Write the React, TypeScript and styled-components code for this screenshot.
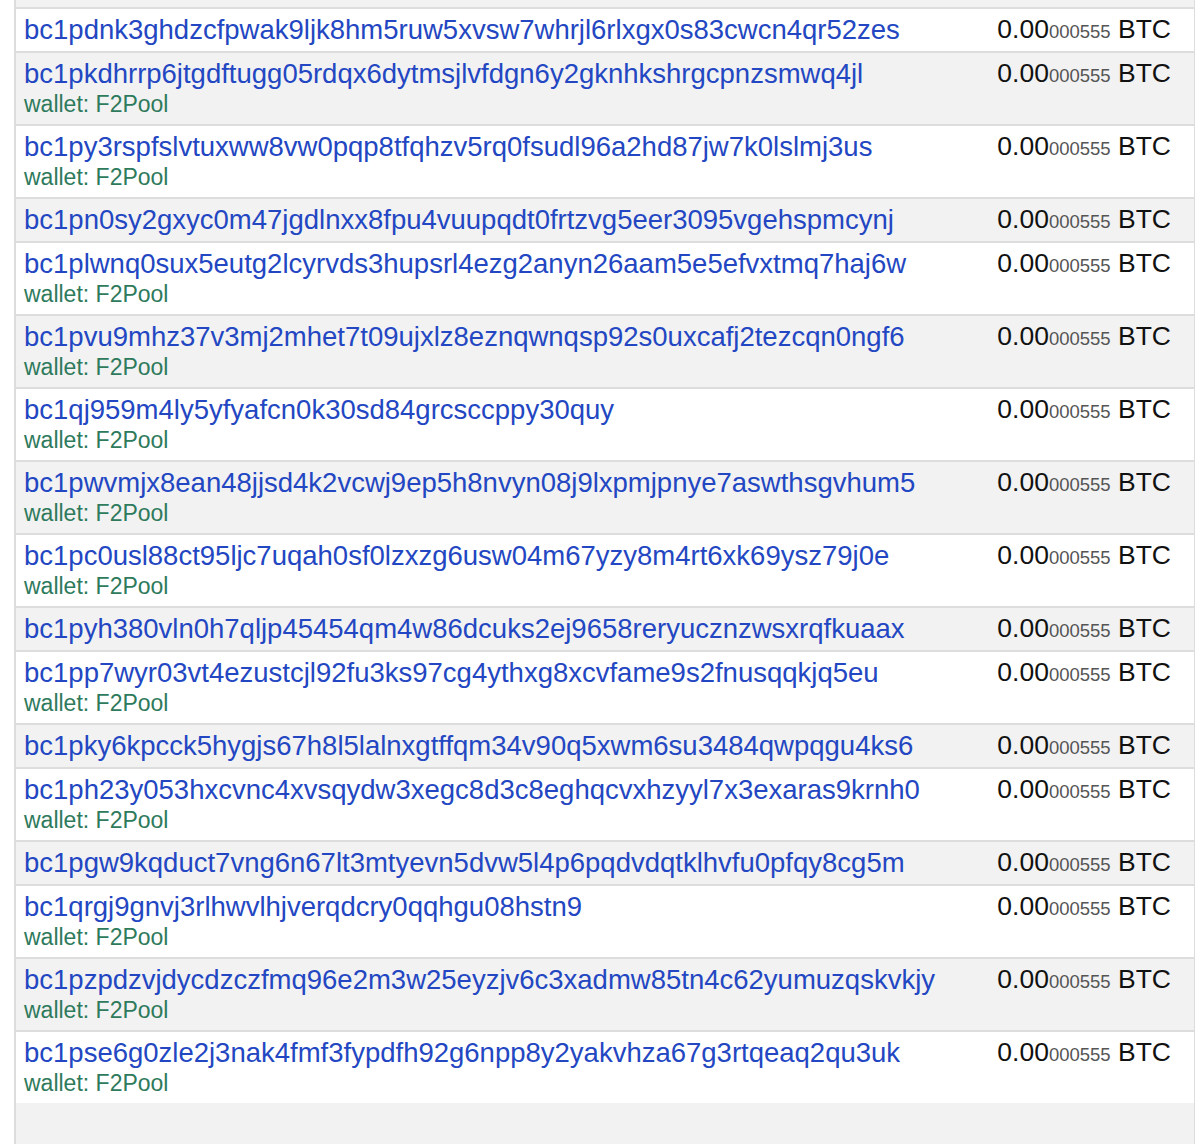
import styled, { createGlobalStyle } from "styled-components";

const Global = createGlobalStyle`
  body { margin: 0; background: #fff; font-family: "Liberation Sans", Arial, sans-serif; }
`;

const Table = styled.div`
  margin: 0 5px 0 14px;
  border-left: 2px solid #ddd;
  border-right: 1px solid #ddd;
  padding-top: 7px;
  background: #f2f2f2;
  height: 1144px;
  overflow: hidden;
`;

const Row = styled.div<{ $grey: boolean }>`
  display: flex;
  justify-content: space-between;
  align-items: flex-start;
  border-top: 2px solid #ddd;
  background: ${(p) => (p.$grey ? "#f2f2f2" : "#fff")};
  padding: 5px 23px 4px 8px;
`;

const Left = styled.div`
  display: flex;
  flex-direction: column;
`;

const Address = styled.a`
  color: #2347c2;
  font-size: 27.5px;
  line-height: 31px;
  text-decoration: none;
`;

const Wallet = styled.span`
  color: #2e7a5c;
  font-size: 23px;
  line-height: 31px;
`;

const Amount = styled.div`
  font-size: 26.5px;
  line-height: 31px;
  color: #111;
  white-space: nowrap;
`;

const Small = styled.span`
  font-size: 18.5px;
  color: #555;
`;

const rows: [string, boolean][] = [
  ["bc1pdnk3ghdzcfpwak9ljk8hm5ruw5xvsw7whrjl6rlxgx0s83cwcn4qr52zes", false],
  ["bc1pkdhrrp6jtgdftugg05rdqx6dytmsjlvfdgn6y2gknhkshrgcpnzsmwq4jl", true],
  ["bc1py3rspfslvtuxww8vw0pqp8tfqhzv5rq0fsudl96a2hd87jw7k0lslmj3us", true],
  ["bc1pn0sy2gxyc0m47jgdlnxx8fpu4vuupqdt0frtzvg5eer3095vgehspmcynj", false],
  ["bc1plwnq0sux5eutg2lcyrvds3hupsrl4ezg2anyn26aam5e5efvxtmq7haj6w", true],
  ["bc1pvu9mhz37v3mj2mhet7t09ujxlz8eznqwnqsp92s0uxcafj2tezcqn0ngf6", true],
  ["bc1qj959m4ly5yfyafcn0k30sd84grcsccppy30quy", true],
  ["bc1pwvmjx8ean48jjsd4k2vcwj9ep5h8nvyn08j9lxpmjpnye7aswthsgvhum5", true],
  ["bc1pc0usl88ct95ljc7uqah0sf0lzxzg6usw04m67yzy8m4rt6xk69ysz79j0e", true],
  ["bc1pyh380vln0h7qljp45454qm4w86dcuks2ej9658reryucznzwsxrqfkuaax", false],
  ["bc1pp7wyr03vt4ezustcjl92fu3ks97cg4ythxg8xcvfame9s2fnusqqkjq5eu", true],
  ["bc1pky6kpcck5hygjs67h8l5lalnxgtffqm34v90q5xwm6su3484qwpqgu4ks6", false],
  ["bc1ph23y053hxcvnc4xvsqydw3xegc8d3c8eghqcvxhzyyl7x3exaras9krnh0", true],
  ["bc1pgw9kqduct7vng6n67lt3mtyevn5dvw5l4p6pqdvdqtklhvfu0pfqy8cg5m", false],
  ["bc1qrgj9gnvj3rlhwvlhjverqdcry0qqhgu08hstn9", true],
  ["bc1pzpdzvjdycdzczfmq96e2m3w25eyzjv6c3xadmw85tn4c62yumuzqskvkjy", true],
  ["bc1pse6g0zle2j3nak4fmf3fypdfh92g6npp8y2yakvhza67g3rtqeaq2qu3uk", true],
];

export default function App() {
  return (
    <>
      <Global />
      <Table>
        {rows.map(([addr, wallet], i) => (
          <Row key={addr} $grey={i % 2 === 1}>
            <Left>
              <Address href="#">{addr}</Address>
              {wallet && <Wallet>wallet: F2Pool</Wallet>}
            </Left>
            <Amount>
              0.00<Small>000555</Small> BTC
            </Amount>
          </Row>
        ))}
      </Table>
    </>
  );
}
